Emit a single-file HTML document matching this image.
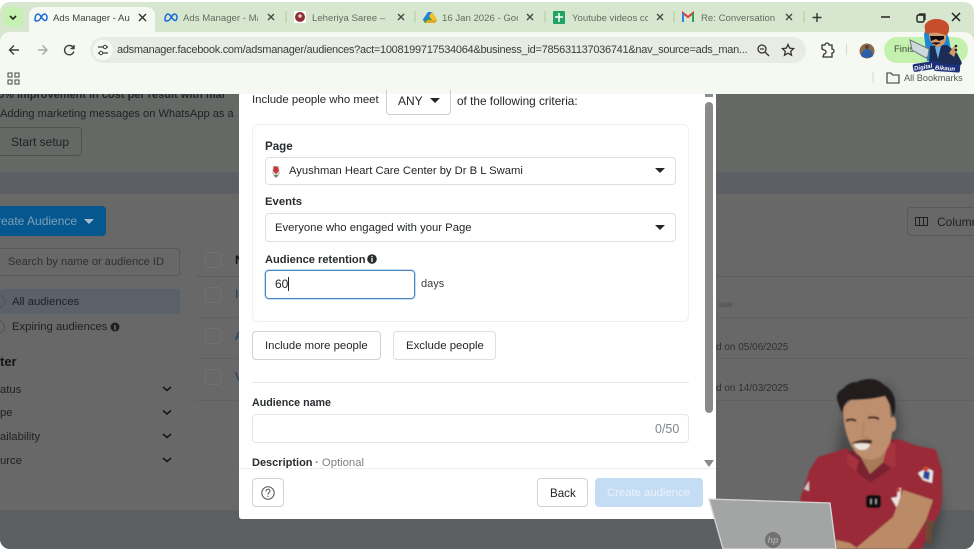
<!DOCTYPE html>
<html><head><meta charset="utf-8"><style>
html,body{margin:0;padding:0;background:#fff}
#p{position:relative;width:974px;height:549px;overflow:hidden;background:#fff;font-family:"Liberation Sans",sans-serif;filter:blur(.3px)}
#p div{position:absolute;box-sizing:border-box}
.t{white-space:nowrap;position:absolute}
.tab{font-size:9.6px;color:#666b62;top:12.5px;white-space:nowrap;position:absolute;overflow:hidden}
.d{color:#222628;font-size:11.4px;white-space:nowrap;position:absolute}
.dk{color:#1f2122;font-size:11.3px;white-space:nowrap;position:absolute}
.b{font-weight:bold;font-size:11px;color:#2a2d30}
.box{border:1px solid #ced0d4;border-radius:4px;background:#fff}
.cb{border:1px solid #737575;border-radius:3px;width:16px;height:16px}
</style></head><body><div id="p">
<!-- browser chrome -->
<div style="left:0;top:2px;width:974px;height:40px;background:#d7e6cf;border-radius:10px 10px 0 0"></div>
<div style="left:0;top:32px;width:974px;height:62px;background:#f6f9f1;border-radius:10px 10px 0 0"></div>
<div style="left:3px;top:7px;width:21px;height:20px;background:#c6f1b2;border-radius:6px"></div>
<div style="left:29px;top:7px;width:126px;height:26px;background:#f6f9f1;border-radius:8px 8px 0 0"></div>
<svg style="position:absolute;left:0;top:0" width="974" height="94" fill="none">
<path d="M10 16l3 3 3-3" stroke="#1e2a1c" stroke-width="1.6"/>
<g stroke="#1668d9" stroke-width="1.5"><path d="M35 20c0-5 2-6 3-6 2 0 3 3 4 4s2 2.500 3 2.500 2-1 2-3-1-3.500-2.500-3.500c-2 0-3 3-4 4.500s-2 2.500-3.500 2.500-2-.500-2-1z"/><path d="M165 20c0-5 2-6 3-6 2 0 3 3 4 4s2 2.500 3 2.500 2-1 2-3-1-3.500-2.500-3.500c-2 0-3 3-4 4.500s-2 2.500-3.500 2.500-2-.500-2-1z"/></g>
<g stroke="#2b2f2a" stroke-width="1.300"><path d="M139 14l7 7M146 14l-7 7"/><path d="M268 14l6 6M274 14l-6 6" stroke="#444"/><path d="M398 14l6 6M404 14l-6 6" stroke="#444"/><path d="M527 14l6 6M533 14l-6 6" stroke="#444"/><path d="M657 14l6 6M663 14l-6 6" stroke="#444"/><path d="M786 14l6 6M792 14l-6 6" stroke="#444"/></g>
<g stroke="#b4d0a8" stroke-width="1.200"><path d="M286 11v12M415 11v12M545 11v12M674 11v12M804 11v12"/></g>
<rect x="294" y="11" width="12" height="12" fill="#fff"/><circle cx="300" cy="17" r="5" fill="#8f2b35"/><circle cx="300" cy="16" r="1.800" fill="#e6d3c8"/>
<path d="M428 12h4l5 8-2 3h-10l-2-3z" fill="#2f9e55"/><path d="M428 12h4l-5 8h-4.500z" fill="#2a7be4"/><path d="M432 12l5 8h-5l-3-4z" fill="#f6c026"/><path d="M425 23l2.500-3h9.500l-2 3z" fill="#e2a91f"/>
<rect x="553" y="11" width="12" height="13" rx="1" fill="#1fa463"/><path d="M559 13v9M555 17h8" stroke="#fff" stroke-width="1.500"/>
<path d="M683 22V13l5 4 5-4v9" stroke="#d93b2e" stroke-width="2"/><path d="M683 22V13" stroke="#3d7fe0" stroke-width="2"/><path d="M693 22V13" stroke="#2f9e55" stroke-width="2"/>
<path d="M817 13v9M812.500 17.500h9" stroke="#333" stroke-width="1.400"/>
<path d="M881 17h9" stroke="#222" stroke-width="1.500"/>
<rect x="917" y="15" width="7" height="7" rx="1.500" stroke="#222" stroke-width="1.400"/><path d="M919 14h6v6" stroke="#222" stroke-width="1.200"/>
<path d="M952 13l8 8M960 13l-8 8" stroke="#222" stroke-width="1.500"/>
<path d="M19 50h-9M14 45.500L9.500 50l4.500 4.500" stroke="#3a3f38" stroke-width="1.400"/>
<path d="M47 50h-9M42.500 45.500L47 50l-4.500 4.500" stroke="#a6aaa2" stroke-width="1.400"/>
<path d="M73.500 48a4.700 4.700 0 1 0 .3 3.500M74 45v3.500h-3.500" stroke="#3a3f38" stroke-width="1.400"/>
<rect x="90" y="37" width="716" height="26" rx="13" fill="#e8ece2"/>
<circle cx="103" cy="50" r="10" fill="#f6f9f1"/>
<path d="M98 47h5M107 47h1M98 53h1M103 53h5" stroke="#3a3f38" stroke-width="1.200"/><circle cx="105" cy="47" r="1.700" stroke="#3a3f38"/><circle cx="101" cy="53" r="1.700" stroke="#3a3f38"/>
<circle cx="762" cy="49" r="4" stroke="#333" stroke-width="1.300"/><path d="M765 52l4 4M760 49h4" stroke="#333" stroke-width="1.300"/>
<path d="M788 44.500l1.700 3.600 3.900.5-2.900 2.700.8 3.900-3.500-2-3.500 2 .8-3.900-2.900-2.700 3.900-.5z" stroke="#333" stroke-width="1.300"/>
<path d="M822 45h3a2 2 0 0 1 4 0h3v4a2 2 0 0 1 0 4v4h-9l1-3a2 2 0 0 0 0-4l-2-1z" stroke="#333" stroke-width="1.300"/>
<path d="M846.500 44v11" stroke="#cfe0c6"/>
<circle cx="867" cy="51" r="7.500" fill="#8a6a4e"/><path d="M861 56c1-5 3-7 6-7s5 2 6 7c-3 2.500-9 2.500-12 0z" fill="#2a5fa8"/><circle cx="867" cy="47" r="2" fill="#5a3d2a"/>
<rect x="884" y="37" width="84" height="26" rx="13" fill="#c5f1ae"/>
<rect x="8" y="73" width="4" height="4" stroke="#44483f"/><rect x="15" y="73" width="4" height="4" stroke="#44483f"/><rect x="8" y="80" width="4" height="4" stroke="#44483f"/><rect x="15" y="80" width="4" height="4" stroke="#44483f"/>
<path d="M873 72v11" stroke="#cfe0c6"/>
<path d="M887 73h4l1.500 2h6.500v8h-12z" stroke="#333" stroke-width="1.100"/>
</svg>
<span class="tab" style="left:53px;width:77px;color:#3e423c">Ads Manager - Aud</span>
<span class="tab" style="left:183px;width:75px">Ads Manager - Ma</span>
<span class="tab" style="left:312px;width:76px">Leheriya Saree – Iff</span>
<span class="tab" style="left:442px;width:76px">16 Jan 2026 - Goo</span>
<span class="tab" style="left:572px;width:76px">Youtube videos cor</span>
<span class="tab" style="left:701px;width:76px">Re: Conversation w</span>
<span class="t" style="left:117px;top:43.5px;font-size:11px;letter-spacing:-.28px;color:#3a3f38">adsmanager.facebook.com/adsmanager/audiences?act=1008199717534064&amp;business_id=785631137036741&amp;nav_source=ads_man...</span>
<span class="t" style="left:894px;top:44px;font-size:9.5px;color:#3a4a33">Finish</span>
<span class="t" style="left:904px;top:72.5px;font-size:9.2px;color:#555a52">All Bookmarks</span>

<!-- dimmed page -->
<div style="left:0;top:94px;width:974px;height:455px;background:#676867;border-radius:0 0 10px 10px;overflow:hidden">
<div style="left:0;top:78px;width:974px;height:22px;background:#5c6064"></div>
<div style="left:0;top:416px;width:974px;height:39px;background:#5c6062"></div>
<div style="left:0;top:0;width:974px;height:78px;background:#666866"></div>
<span class="t" style="left:-2px;top:-5px;font-size:11px;font-weight:bold;color:#242627">5% improvement in cost per result with mar</span>
</div>
<span class="dk" style="left:0;top:107.5px;font-size:11.1px;color:#202223">Adding marketing messages on WhatsApp as a</span>
<div style="left:-10px;top:127px;width:92px;height:29px;border:1px solid #505252;border-radius:4px"></div>
<span class="dk" style="left:11px;top:135px;font-size:12px;color:#202223">Start setup</span>
<div style="left:-10px;top:206px;width:116px;height:30px;background:#05578f;border-radius:4px"></div>
<span class="t" style="left:-3px;top:214px;font-size:12px;color:#7d9fb8">reate Audience</span>
<div style="left:84px;top:219px;width:0;height:0;border:5px solid transparent;border-top:5px solid #a9bfcf"></div>
<div style="left:-10px;top:248px;width:190px;height:28px;border:1px solid #57595a;border-radius:3px"></div>
<span class="t" style="left:8px;top:256px;font-size:11.1px;color:#2e3133">Search by name or audience ID</span>
<div style="left:0;top:289px;width:180px;height:25px;background:#5b6169;border-radius:2px"></div>
<span class="dk" style="left:12px;top:295.5px;color:#1e2022">All audiences</span>
<span class="dk" style="left:12px;top:321px;color:#1e2022">Expiring audiences</span>
<svg style="position:absolute;left:0;top:280px" width="180" height="200" fill="none">
<circle cx="-2" cy="21.500" r="6.500" stroke="#515355"/><circle cx="-2" cy="47" r="6.500" stroke="#515355"/>
<circle cx="115" cy="47" r="4.500" fill="#1d1f20"/><path d="M115 45v5" stroke="#777" stroke-width="1.300"/>
<g stroke="#141516" stroke-width="1.500"><path d="M163 107l4 3.500 4-3.500M163 130.500l4 3.500 4-3.500M163 154l4 3.500 4-3.500M163 178l4 3.500 4-3.500"/></g>
</svg>
<span class="t" style="left:0;top:354px;font-size:13px;font-weight:bold;color:#141516">ter</span>
<span class="dk" style="left:0;top:383.5px;color:#1e2022">atus</span>
<span class="dk" style="left:0;top:406.5px;color:#1e2022">pe</span>
<span class="dk" style="left:0;top:430.5px;color:#1e2022">ailability</span>
<span class="dk" style="left:0;top:454.5px;color:#1e2022">urce</span>
<div class="cb" style="left:205px;top:252px;border-color:#707272"></div>
<div class="cb" style="left:205px;top:287px;border-color:#707272"></div>
<div class="cb" style="left:205px;top:328px;border-color:#707272"></div>
<div class="cb" style="left:205px;top:369px;border-color:#707272"></div>
<span class="t" style="left:235px;top:253px;font-size:12px;font-weight:bold;color:#141516">N</span>
<span class="t" style="left:235px;top:287px;font-size:12px;color:#1b3c66">I</span>
<span class="t" style="left:235px;top:329px;font-size:12px;color:#1b3c66">A</span>
<span class="t" style="left:235px;top:370px;font-size:12px;color:#1b3c66">V</span>
<div style="left:196px;top:276px;width:778px;height:1px;background:#5b5c5c"></div>
<div style="left:196px;top:317px;width:778px;height:1px;background:#606161"></div>
<div style="left:196px;top:358px;width:778px;height:1px;background:#606161"></div>
<div style="left:196px;top:400px;width:778px;height:1px;background:#606161"></div>
<span class="t" style="left:719px;top:299px;font-size:8.5px;color:#474949">use</span>
<span class="t" style="left:716px;top:341.5px;font-size:10px;color:#2f3132">d on 05/06/2025</span>
<span class="t" style="left:716px;top:382.5px;font-size:10px;color:#2f3132">d on 14/03/2025</span>
<div style="left:907px;top:207px;width:80px;height:29px;border:1px solid #585a5a;border-radius:4px"></div>
<svg style="position:absolute;left:914px;top:216px" width="15" height="11" fill="none" stroke="#1f2122"><path d="M1.500 1.500h12v8h-12zM5.500 1.500v8M9.500 1.500v8"/></svg>
<span class="dk" style="left:937px;top:214.500px;font-size:12px">Column</span>

<!-- modal -->
<div style="left:239px;top:94px;width:477px;height:425px;background:#fff;border-radius:0 0 3px 3px"></div>
<span class="d" style="left:252px;top:94px">Include people who meet</span>
<div style="left:386px;top:90px;width:65px;height:25px;border:1px solid #ccced2;border-top:none;border-radius:0 0 4px 4px"></div>
<span class="d" style="left:398px;top:94px;font-size:12px">ANY</span>
<div style="left:430px;top:98px;width:0;height:0;border:5px solid transparent;border-top:5px solid #222628"></div>
<span class="d" style="left:457px;top:93.5px;font-size:11.8px">of the following criteria:</span>
<div style="left:252px;top:124px;width:437px;height:198px;border:1px solid #eef0f2;border-radius:6px"></div>
<span class="d b" style="left:265px;top:139.5px;font-size:11.6px">Page</span>
<div class="box" style="left:265px;top:157px;width:411px;height:28px;border-color:#dcdee1"></div>
<svg style="position:absolute;left:270px;top:164px" width="12" height="15"><path d="M3 2l6 0 1 8-2 3H4L2 9z" fill="#d9cfc8"/><path d="M4 2l4 1 1 4-3 3-3-3z" fill="#c23a3e"/><path d="M4 11l2 3 2-3z" fill="#3d8a5a"/></svg>
<span class="d" style="left:289px;top:165px;font-size:11.23px">Ayushman Heart Care Center by Dr B L Swami</span>
<div style="left:655px;top:168px;width:0;height:0;border:5.500px solid transparent;border-top:5.500px solid #222628"></div>
<span class="d b" style="left:265px;top:196px;font-size:11.3px">Events</span>
<div class="box" style="left:265px;top:213px;width:411px;height:29px;border-color:#dcdee1"></div>
<span class="d" style="left:275px;top:222px;font-size:11.3px">Everyone who engaged with your Page</span>
<div style="left:655px;top:225px;width:0;height:0;border:5.500px solid transparent;border-top:5.500px solid #222628"></div>
<span class="d b" style="left:265px;top:253.5px;font-size:11.1px">Audience retention</span>
<svg style="position:absolute;left:367px;top:254px" width="10" height="10"><circle cx="5" cy="5" r="4.800" fill="#2a2d2f"/><path d="M5 4v4M5 2v1.300" stroke="#fff" stroke-width="1.300"/></svg>
<div style="left:265px;top:270px;width:150px;height:29px;border:1px solid #4b86bd;border-radius:4px;box-shadow:0 0 0 1px #c5dcf0"></div>
<span class="d" style="left:275px;top:277px;font-size:12px">60</span>
<div style="left:288px;top:277px;width:1px;height:14px;background:#222"></div>
<span class="d" style="left:421px;top:277.5px;font-size:11px;color:#3a3e40">days</span>
<div class="box" style="left:252px;top:331px;width:129px;height:29px;border-color:#cfd1d4"></div>
<span class="d" style="left:265px;top:339.5px;font-size:11.34px">Include more people</span>
<div class="box" style="left:393px;top:331px;width:103px;height:29px;border-color:#dcdee1"></div>
<span class="d" style="left:406px;top:339.5px">Exclude people</span>
<div style="left:252px;top:382px;width:437px;height:1px;background:#e4e6e8"></div>
<span class="d b" style="left:252px;top:396.5px;font-size:10.7px">Audience name</span>
<div class="box" style="left:252px;top:414px;width:437px;height:29px;border-color:#e4e6e8"></div>
<span class="t" style="left:655px;top:421.5px;font-size:12.5px;color:#83878a">0/50</span>
<span class="d b" style="left:252px;top:456.5px">Description</span>
<span class="t" style="left:315px;top:456.5px;font-size:11.3px;color:#7d8184;font-weight:bold">· <span style="font-weight:normal">Optional</span></span>
<!-- scrollbar -->
<div style="left:705px;top:94px;width:8px;height:3px;background:#8d8d8d"></div>
<div style="left:705px;top:102px;width:8px;height:311px;background:#8a8a8a;border-radius:4px"></div>
<div style="left:704px;top:460px;width:0;height:0;border:5px solid transparent;border-top:7px solid #8a8a8a"></div>
<!-- footer -->
<div style="left:239px;top:468px;width:477px;height:51px;background:#fff;border-top:1px solid #eceef0;border-radius:0 0 3px 3px"></div>
<div class="box" style="left:252px;top:478px;width:32px;height:29px;border-color:#cfd1d4"></div>
<svg style="position:absolute;left:260px;top:485px" width="16" height="16" fill="none" stroke="#4c5053"><circle cx="8" cy="8" r="6.200"/><path d="M6 6.500c0-3 4-3 4-.5 0 1.500-2 1.500-2 3.500M8 10.700v1.300"/></svg>
<div class="box" style="left:537px;top:478px;width:51px;height:29px;border-color:#cfd1d4"></div>
<span class="d" style="left:550px;top:486.5px;font-size:11.6px">Back</span>
<div style="left:595px;top:478px;width:108px;height:29px;background:#c5dcf5;border-radius:4px"></div>
<span class="t" style="left:607px;top:486.5px;font-size:11.3px;color:#e9f2fb">Create audience</span>

<!-- presenter -->
<svg style="position:absolute;left:700px;top:360px" width="274" height="189" viewBox="0 0 274 189">
<defs><filter id="bl"><feGaussianBlur stdDeviation="5"/></filter><filter id="s"><feGaussianBlur stdDeviation=".7"/></filter></defs>
<path d="M150 30l40-5 12 40-5 18 38 12 8 55-8 39H120l20-120z" fill="#333" opacity=".55" filter="url(#bl)"/>
<g filter="url(#s)">
<!-- shirt -->
<path d="M100 139l10-30 8-12 29-9 6 6 37-14 9-1 15 6c12 3 19 3 22 5l6 20v32l-2 10-8 14-10 23H123z" fill="#9a2c37"/>
<!-- neck + collar -->
<path d="M147 91l3 15 20 17 25-17-1-26-10-2-20 12z" fill="#7a2230"/>
<path d="M156 80l2 12 12 22 18-16 1-20z" fill="#a87a59"/>
<path d="M147 92l12 8-3 12-9-8zM183 102l6-22 6 4 1 21-4 4z" fill="#a6303c"/>
<!-- head -->
<path d="M143 48c0 17 4 32 11 42 6 9 18 13 27 6 8-7 11-18 11-24 3 0 5-4 4-10 0-5-3-7-5-4l-2-20c-10-7-32-8-46 10z" fill="#bd8f6e"/>
<path d="M143 55c-2-6-4-8-5-13-3-6 0-11 6-14 3-4 8-6 13-6 8-4 20-5 27 3 9 5 12 14 11 24 0 3-1 5-2 7-1-6-4-14-8-20-10 3-25 4-37 4-4 4-5 9-5 15z" fill="#211d1c"/>
<path d="M151 84c5-4 13-5 21-4 0 1 0 3-1 4-6-1-13-1-20 0z" fill="#4a2a22"/><path d="M154 84c5-1 11-1 16 0-1 4-3 6-8 6-4 0-7-2-8-6z" fill="#ece3dc"/>
<path d="M146 61c3-2 7-2 10 0M168 58c3-1 8-1 11 1" stroke="#2e1e18" stroke-width="2" fill="none"/>
<path d="M164 62l-2 14c2 2 5 2 7 1" stroke="#a67a5c" stroke-width="1" fill="none"/>
<!-- badges -->
<path d="M218 113l9-5 6 3-1 12-9-3z" fill="#eee9e9"/><path d="M224 111l6 1-1 8-6-2z" fill="#24479a"/><circle cx="226" cy="109" r="2.500" fill="#d3492c"/>
<path d="M191 138l6 10 3-7 1-13-3 0-1 9z" fill="#e9e3e0"/><circle cx="198" cy="130" r="2" fill="#c43a30"/>
<rect x="166" y="135" width="15" height="13" rx="3" fill="#0d0d0e"/><path d="M171 139v5M176 139v5" stroke="#bbb"/>
<!-- arm -->
<path d="M155 189l38-32 10-27 30 10-7 20-10 17-9 12z" fill="#bb8b68"/>
<path d="M226 160l7 1-2 24-5-4z" fill="#6b4a32"/>
<path d="M104 129l5-8 0 10z" fill="#d2cbc8"/>
<path d="M136 180l14 3 8 6h-22z" fill="#b98a68"/>
</g>
<!-- laptop -->
<path d="M9 139l121 4 6 46H23z" fill="#a3a5a4" stroke="#d4d5d3" stroke-width="1.300"/>
<circle cx="73" cy="180" r="8" fill="#6f706f"/><text x="73" y="183" font-size="9" font-style="italic" font-weight="bold" text-anchor="middle" fill="#a8a9a7" font-family="Liberation Sans">hp</text>
</svg>
<div style="left:0;top:544px;width:6px;height:5px;background:#fff;clip-path:polygon(0 0,100% 100%,0 100%)"></div>

<!-- sticker logo -->
<svg style="position:absolute;left:905px;top:17px" width="62" height="60" viewBox="0 0 62 60">
<path d="M19 17c1-5 8-6 13-5s11 3 12 10l4 22H22z" fill="#1b88d6"/>
<path d="M25 29l17-1 10 8 5 10-4 6-17 2-12-5z" fill="#1b2d55"/>
<path d="M30 30l3 12 3-13z" fill="#6bb6e6"/>
<path d="M24 17c0-4 14-4 17 0 1 7-2 12-8 13-6-1-9-6-9-13z" fill="#d39a6d"/>
<path d="M20 12c-2-6 5-10 11-10 8 0 14 4 13 10 0 3-1 6-4 6-6-3-13-3-18-1-2-1-2-3-2-5z" fill="#c64e2b"/>
<path d="M25 19h14v3l-5 2-3-2-5 2z" fill="#0e0e10"/>
<path d="M26 26c3-1 8-1 10 0l-5 2z" fill="#2c1a12"/>
<path d="M5 23l19 9-1 7-2 2-14-8z" fill="#cfd8da" stroke="#6d7880"/>
<path d="M44 36l5-7 3 3-3 8z" fill="#d39a6d"/>
<g transform="rotate(-9 22 50)"><rect x="8" y="45" width="26" height="8" rx="2" fill="#1d2f78"/><text x="9" y="51.500" font-size="6" font-weight="bold" font-style="italic" fill="#fff" font-family="Liberation Sans">Digital</text></g>
<g transform="rotate(4 45 52)"><rect x="29" y="47" width="26" height="8" rx="2" fill="#1d2f78"/><text x="30" y="53.500" font-size="6" font-weight="bold" font-style="italic" fill="#fff" font-family="Liberation Sans">Bikaun</text></g>
</svg>
<svg style="position:absolute;left:953px;top:44px" width="6" height="14"><circle cx="3" cy="2" r="1.300" fill="#222"/><circle cx="3" cy="6" r="1.300" fill="#222"/></svg>
</div></body></html>
